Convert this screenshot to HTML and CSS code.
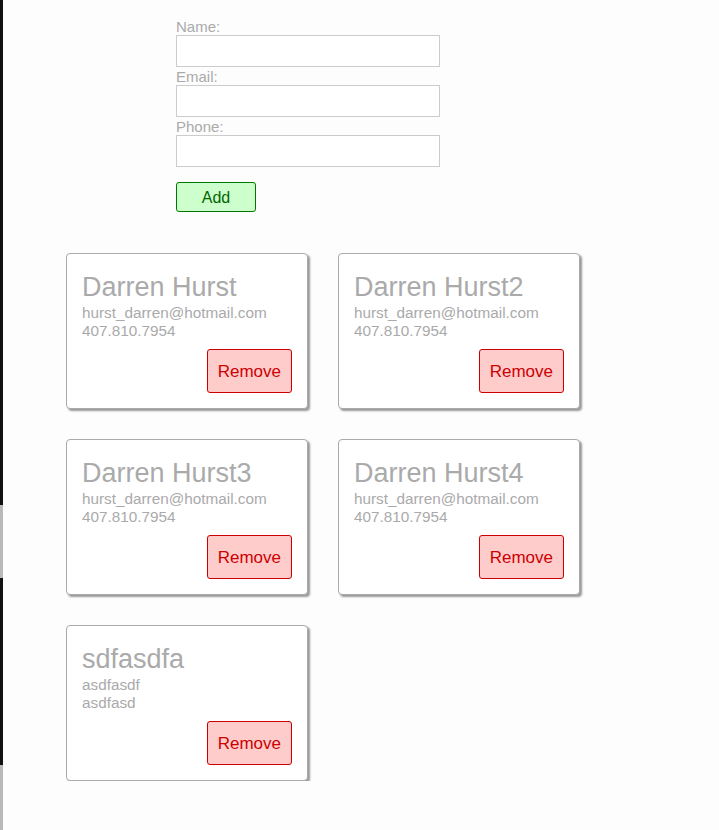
FILE: index.html
```html
<!DOCTYPE html>
<html lang="en">
<head>
<meta charset="utf-8">
<title>Contacts</title>
<link rel="stylesheet" href="styles.css">
</head>
<body>
  <form class="contact-form">
    <label class="field-label" for="name">Name:</label>
    <input class="field-input" id="name" type="text">
    <label class="field-label" for="email">Email:</label>
    <input class="field-input" id="email" type="text">
    <label class="field-label" for="phone">Phone:</label>
    <input class="field-input" id="phone" type="text">
    <button class="add-btn" type="button">Add</button>
  </form>

  <div class="cards">
    <div class="card">
      <h2 class="card-name">Darren Hurst</h2>
      <div class="card-info card-email">hurst_darren@hotmail.com</div>
      <div class="card-info">407.810.7954</div>
      <button class="remove-btn" type="button">Remove</button>
    </div>
    <div class="card">
      <h2 class="card-name">Darren Hurst2</h2>
      <div class="card-info card-email">hurst_darren@hotmail.com</div>
      <div class="card-info">407.810.7954</div>
      <button class="remove-btn" type="button">Remove</button>
    </div>
    <div class="card">
      <h2 class="card-name">Darren Hurst3</h2>
      <div class="card-info card-email">hurst_darren@hotmail.com</div>
      <div class="card-info">407.810.7954</div>
      <button class="remove-btn" type="button">Remove</button>
    </div>
    <div class="card">
      <h2 class="card-name">Darren Hurst4</h2>
      <div class="card-info card-email">hurst_darren@hotmail.com</div>
      <div class="card-info">407.810.7954</div>
      <button class="remove-btn" type="button">Remove</button>
    </div>
    <div class="card">
      <h2 class="card-name">sdfasdfa</h2>
      <div class="card-info card-email">asdfasdf</div>
      <div class="card-info">asdfasd</div>
      <button class="remove-btn" type="button">Remove</button>
    </div>
  </div>
</body>
</html>
```
FILE: styles.css
```css
html {
  background:
    linear-gradient(to bottom, #111 0, #111 505px, #b9b9b9 505px, #b9b9b9 578px, #111 578px, #111 765px, #b9b9b9 765px) left top / 3px 830px no-repeat,
    #fdfdfd;
}

body {
  margin: 0;
  font-family: "Liberation Sans", Arial, Helvetica, sans-serif;
  color: #aaaaaa;
}

.contact-form {
  display: flex;
  flex-direction: column;
  align-items: flex-start;
  width: 264px;
  margin: 0 0 0 176px;
  padding-top: 17px;
}

.field-label {
  display: block;
  padding-top: 1px;
  font-size: 15px;
  line-height: 17px;
  color: #aaaaaa;
}

.field-input {
  display: block;
  box-sizing: border-box;
  width: 264px;
  height: 32px;
  margin: 0;
  padding: 0 5px;
  border: 1px solid #cccccc;
  background: #ffffff;
  font-family: inherit;
  font-size: 14px;
}

.add-btn {
  box-sizing: border-box;
  width: 80px;
  height: 30px;
  margin-top: 15px;
  padding: 2px 0 0 0;
  background: #ccffcc;
  border: 1px solid #007700;
  border-radius: 3px;
  color: #006600;
  font-family: inherit;
  font-size: 16px;
}

.cards {
  display: grid;
  grid-template-columns: repeat(2, 242px);
  gap: 30px;
  margin: 41px 0 0 66px;
}

.card {
  box-sizing: border-box;
  display: flex;
  flex-direction: column;
  height: 156px;
  padding: 17px 15px 15px 15px;
  background: #ffffff;
  border: 1px solid #aaaaaa;
  border-radius: 4px;
  box-shadow: 2px 2px 2px #999999;
}

.card-name {
  margin: 0;
  font-size: 27px;
  line-height: 32px;
  font-weight: normal;
  color: #aaaaaa;
}

.card-info {
  font-size: 15.3px;
  line-height: 18px;
  color: #aaaaaa;
}

.card-email {
  margin-top: 1px;
}

.remove-btn {
  align-self: flex-end;
  box-sizing: border-box;
  height: 44px;
  margin-top: 9px;
  padding: 2px 10px 0 10px;
  background: #ffcccc;
  border: 1px solid #cc0000;
  border-radius: 3px;
  color: #cc0000;
  font-family: inherit;
  font-size: 17px;
}
```
